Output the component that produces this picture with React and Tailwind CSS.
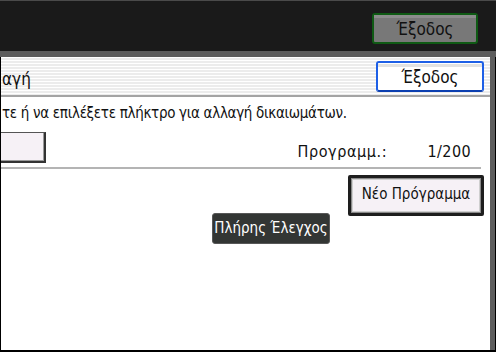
export default function App() {
  return (
    <div className="w-[496px] h-[352px] bg-black flex flex-col overflow-hidden font-['Liberation_Sans_Narrow','DejaVu_Sans_Condensed','Liberation_Sans',sans-serif] text-[#111]">
      {/* top dark bar */}
      <div className="h-[51px] bg-[#1a1a1a] border-t border-[#4a4a4a] flex justify-end items-start pt-[12px] pr-[18px]">
        <div className="w-[106px] h-[31px] rounded-[3px] border-2 border-[#0f5a14] bg-[#787878] flex flex-col">
          <div className="h-[3px] bg-[#8c8c8c]" />
          <div className="flex-1 flex items-center justify-center text-[17px] leading-none pb-[2px]">Έξοδος</div>
        </div>
      </div>
      <div className="h-[6px] bg-[#5c5c5c]" />
      {/* body */}
      <div className="flex-1 flex">
        <div className="flex-1 bg-white border-l border-black flex flex-col relative rounded-tr-[3px]">
          {/* header */}
          <div className="h-[40px] border-b-2 border-[#a4a4a4] bg-[repeating-linear-gradient(to_bottom,#ffffff_0px,#ffffff_1px,#ececec_1px,#ececec_3px)] flex items-start justify-between pt-[4px] pr-[6px] overflow-hidden">
            <span className="mt-[10px] ml-[1px] text-[17px] leading-none whitespace-nowrap">αγή</span>
            <div className="w-[108px] h-[31px] rounded-[3px] border-2 border-[#1d5fe6] border-b-[#0c3fb0] bg-white flex flex-col">
              <div className="h-[3px] mt-[1px] bg-[#e2e2e2]" />
              <div className="flex-1 flex items-center justify-center text-[17px] leading-none pb-[2px]">Έξοδος</div>
            </div>
          </div>
          {/* instruction */}
          <div className="h-[35px] pt-[8px] pl-[1px] text-[15px] tracking-[-0.3px] leading-[17px] whitespace-nowrap">
            τε ή να επιλέξετε πλήκτρο για αλλαγή δικαιωμάτων.
          </div>
          {/* row with left button and counter */}
          <div className="h-[35px] flex items-start">
            <div className="w-[45px] h-[31px] bg-[#f6f1f6] border-t border-[#555] border-r-2 border-b-2 border-r-[#333] border-b-[#333] shadow-[inset_-1px_-1px_0_#9a9a9a]" />
            <div className="flex-1 flex justify-end items-center pt-[12px] pr-[19px] text-[16px] leading-none">
              <span className="w-[130px] tracking-[0.6px]">Προγραμμ.:</span>
              <span className="tracking-[0.4px]">1/200</span>
            </div>
          </div>
          <div className="h-[2px] bg-[#b4b4b4] mr-[9px]" />
          {/* new program */}
          <div className="pt-[6px] flex justify-end pr-[6px]">
            <div className="w-[136px] h-[41px] rounded-[2px] border-[3px] border-[#1e1e1e] bg-[#8a8a8a] p-[1px]">
              <div className="w-full h-full bg-[#f6f1f6] border border-[#cfcfcf] flex items-center justify-center text-[15px] leading-none pb-[2px] whitespace-nowrap">
                Νέο Πρόγραμμα
              </div>
            </div>
          </div>
          {/* tooltip label */}
          <div className="absolute left-[211px] top-[156px] w-[118px] h-[31px] rounded-[3px] bg-[#333634] border border-[#575757] flex items-center justify-center text-white text-[15px] leading-none pb-[1px] whitespace-nowrap">
            Πλήρης Έλεγχος
          </div>
        </div>
        <div className="w-[5px] bg-[#5e5e5e]" />
        <div className="w-[1px] bg-black" />
      </div>
      <div className="h-[2px] bg-black" />
    </div>
  );
}
